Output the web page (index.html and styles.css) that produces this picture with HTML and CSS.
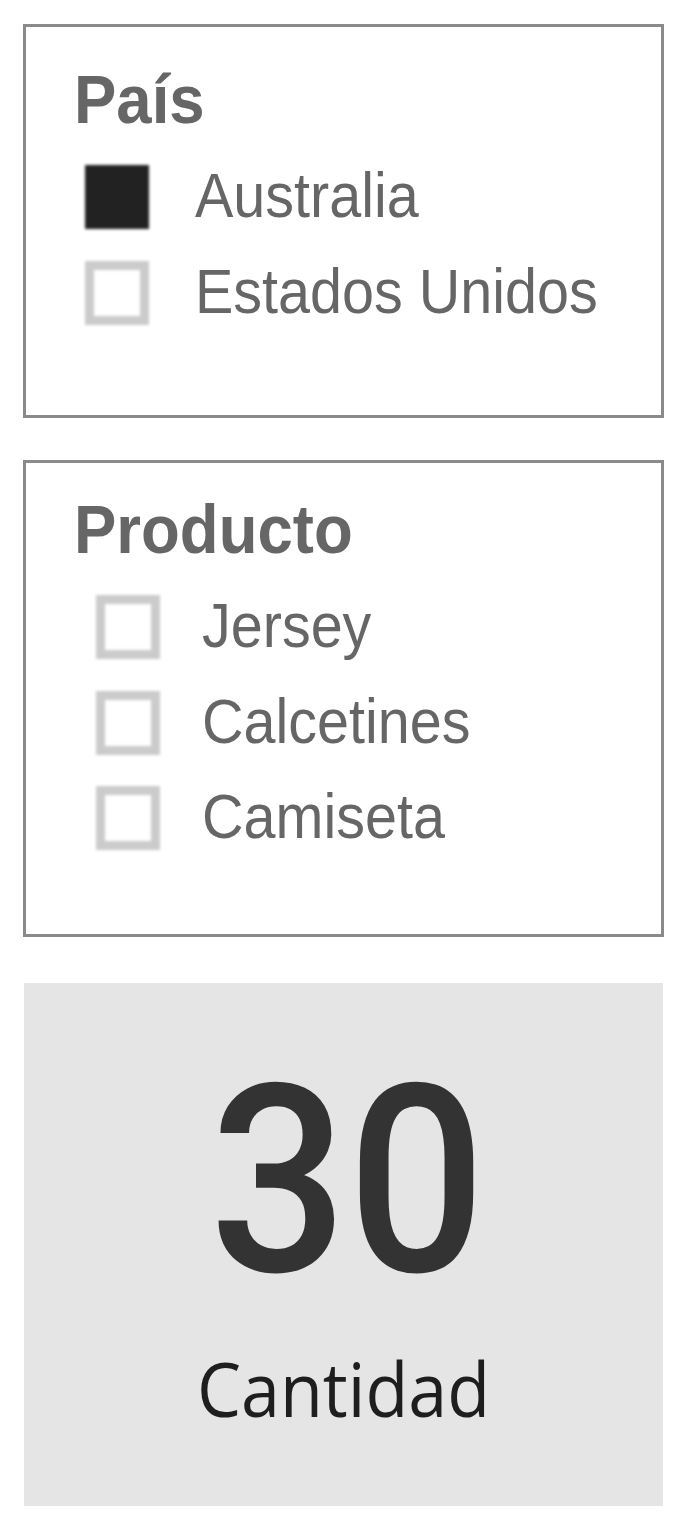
FILE: index.html
```html
<!DOCTYPE html>
<html lang="es">
<head>
<meta charset="utf-8">
<title>Segmentación</title>
<link rel="stylesheet" href="styles.css">
</head>
<body>
<main class="page">
  <section class="slicer slicer-pais">
    <h2 class="slicer-title"><span class="stretch">País</span></h2>
    <ul class="slicer-list list-pais">
      <li class="item"><span class="check check-on"></span><span class="label"><span class="stretch">Australia</span></span></li>
      <li class="item"><span class="check"></span><span class="label"><span class="stretch">Estados Unidos</span></span></li>
    </ul>
  </section>

  <section class="slicer slicer-producto">
    <h2 class="slicer-title"><span class="stretch">Producto</span></h2>
    <ul class="slicer-list list-producto">
      <li class="item"><span class="check"></span><span class="label"><span class="stretch">Jersey</span></span></li>
      <li class="item"><span class="check"></span><span class="label"><span class="stretch">Calcetines</span></span></li>
      <li class="item"><span class="check"></span><span class="label"><span class="stretch">Camiseta</span></span></li>
    </ul>
  </section>

  <section class="card">
    <div class="card-value"><span class="stretch">30</span></div>
    <div class="card-label"><span class="stretch">Cantidad</span></div>
  </section>
</main>
</body>
</html>
```

FILE: styles.css
```css
* { box-sizing: border-box; }

html, body {
  margin: 0;
  padding: 0;
  background: #ffffff;
}

.page {
  width: 688px;
  padding: 24px 0 0 23px;
  display: flex;
  flex-direction: column;
}

.stretch {
  display: inline-block;
  transform: scaleY(1.08);
}

.slicer {
  width: 641px;
  border: 3px solid #8a8a8a;
  padding-left: 44px;
  display: flex;
  flex-direction: column;
}

.slicer-pais {
  height: 394px;
  padding-top: 39px;
}

.slicer-producto {
  height: 477px;
  margin-top: 42px;
  padding-top: 33px;
}

.slicer-title {
  margin: 0 0 0 4px;
  height: 70px;
  font-family: "Liberation Sans", Arial, sans-serif;
  font-weight: 700;
  font-size: 63.5px;
  line-height: 70px;
  color: #666666;
}

.slicer-title .stretch {
  transform-origin: 0 57px;
}

.slicer-list {
  list-style: none;
  margin: 29px 0 0 0;
  padding: 0;
  display: flex;
  flex-direction: column;
}

.list-pais {
  padding-left: 15px;
  gap: 32px;
}

.list-pais .item { gap: 46px; }

.list-producto {
  padding-left: 26px;
  gap: 31.5px;
}

.list-producto .item { gap: 42px; }

.item {
  display: flex;
  align-items: flex-start;
  height: 64px;
}

.check {
  flex: none;
  width: 64px;
  height: 64px;
  border: 9px solid #cbcbcb;
  background: #ffffff;
  filter: blur(1.4px);
}

.check-on {
  border-color: #222222;
  background: #222222;
}

.label {
  font-family: "Liberation Sans", Arial, sans-serif;
  font-size: 57.5px;
  line-height: 64px;
  height: 64px;
  color: #666666;
  white-space: nowrap;
}

.label .stretch {
  transform-origin: 0 52px;
}

.card {
  width: 639px;
  height: 523px;
  margin: 46px 0 0 1px;
  background: #e5e5e5;
  padding-top: 84px;
  display: flex;
  flex-direction: column;
  align-items: center;
}

.card-value {
  font-family: Roboto, "DejaVu Sans", sans-serif;
  font-weight: 500;
  font-size: 243px;
  line-height: 243px;
  height: 243px;
  color: #333333;
  padding-left: 8px;
}

.card-value .stretch {
  transform-origin: 50% 205px;
}

.card-label {
  margin-top: 40px;
  font-family: "Open Sans", "Noto Sans", sans-serif;
  font-size: 70px;
  line-height: 80px;
  height: 80px;
  color: #1e1e1e;
}

.card-label .stretch {
  transform-origin: 50% 67px;
}
```
